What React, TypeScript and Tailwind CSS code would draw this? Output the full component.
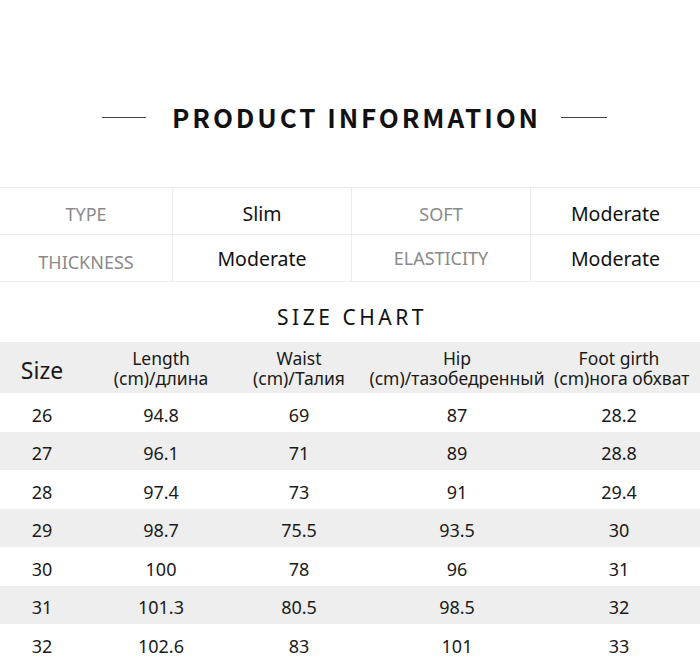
import React from "react";

const info = [
  ["TYPE", "Slim", "SOFT", "Moderate"],
  ["THICKNESS", "Moderate", "ELASTICITY", "Moderate"],
];

const rows = [
  ["26", "94.8", "69", "87", "28.2"],
  ["27", "96.1", "71", "89", "28.8"],
  ["28", "97.4", "73", "91", "29.4"],
  ["29", "98.7", "75.5", "93.5", "30"],
  ["30", "100", "78", "96", "31"],
  ["31", "101.3", "80.5", "98.5", "32"],
  ["32", "102.6", "83", "101", "33"],
];

const cols = "grid grid-cols-[84px_154px_122px_194px_130px_16px]";

const infoPad = [
  ["pt-[6px]", "pt-[6px]", "pt-[6px]", "pt-[6px]"],
  ["pt-[8px]", "pt-[2px]", "pt-0", "pt-[2px]"],
];

export default function App() {
  return (
    <div
      className="w-[700px] h-[664px] overflow-hidden bg-white text-[#1a1a1a]"
      style={{ fontFamily: '"Noto Sans", "Open Sans", sans-serif' }}
    >
      <div className="h-[187px] pt-[99px] pl-[9px] flex items-start justify-center">
        <div className="flex items-center h-[36px]">
          <div className="w-[44px] h-px bg-[#444]" />
          <div
            className="ml-[26px] mr-[20px] text-[26px] leading-[36px] font-bold tracking-[2.9px] text-[#111]"
            style={{ fontFamily: '"Noto Sans CJK SC", "Noto Sans", sans-serif' }}
          >
            PRODUCT INFORMATION
          </div>
          <div className="w-[46px] h-px bg-[#444]" />
        </div>
      </div>

      <div className="border-t border-[#ececec]">
        {info.map((r, i) => (
          <div
            key={i}
            className="grid grid-cols-[172px_179px_179px_170px] h-[47px] border-b border-[#ececec]"
          >
            {r.map((c, j) => (
              <div
                key={j}
                className={`flex items-center justify-center ${
                  j > 0 ? "border-l border-[#ececec]" : ""
                } ${j % 2 === 0 ? "text-[#8a8a8a] text-[18px]" : "text-[#111] text-[19.5px]"} ${infoPad[i][j]}`}
              >
                {c}
              </div>
            ))}
          </div>
        ))}
      </div>

      <div className="h-[60px] flex items-center justify-center pt-[12px]">
        <div className="text-[21px] tracking-[3.5px] text-[#111] pl-[4px]">SIZE CHART</div>
      </div>

      <div className={`${cols} h-[51px] bg-[#eeeeee] items-center text-center`}>
        <div className="text-[23px] leading-[28px] pt-[4px]">Size</div>
        <div className="text-[17.5px] leading-[20px]">
          Length
          <br />
          (cm)/длина
        </div>
        <div className="text-[17.5px] leading-[20px]">
          Waist
          <br />
          (cm)/Талия
        </div>
        <div className="text-[17.5px] leading-[20px] whitespace-nowrap">
          Hip
          <br />
          (cm)/тазобедренный
        </div>
        <div className="text-[17.5px] leading-[20px] whitespace-nowrap">
          Foot girth
          <br />
          (cm)нога обхват
        </div>
        <div />
      </div>

      {rows.map((r, i) => (
        <div
          key={i}
          className={`${cols} h-[38.5px] items-center text-center text-[18px] pt-[6px] ${
            i % 2 === 1 ? "bg-[#eeeeee]" : "bg-white"
          }`}
        >
          {r.map((c, j) => (
            <div key={j}>{c}</div>
          ))}
          <div />
        </div>
      ))}
    </div>
  );
}
